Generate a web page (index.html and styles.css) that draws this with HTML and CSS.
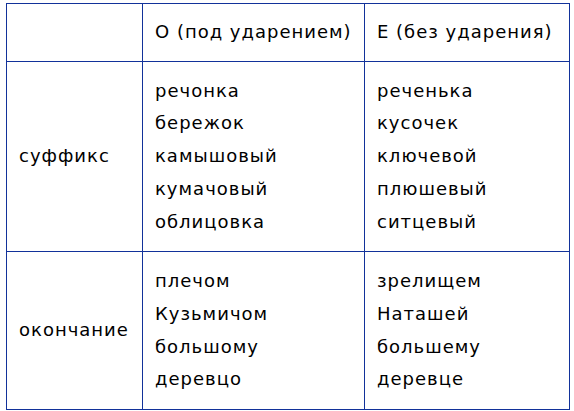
FILE: index.html
```html
<!DOCTYPE html>
<html lang="ru">
<head>
<meta charset="utf-8">
<link rel="stylesheet" href="styles.css">
</head>
<body>
<table class="grid">
  <colgroup>
    <col class="c1">
    <col class="c2">
    <col class="c3">
  </colgroup>
  <tr class="r-head">
    <td></td>
    <td>О (под ударением)</td>
    <td>Е (без ударения)</td>
  </tr>
  <tr class="r-suf">
    <td>суффикс</td>
    <td>речонка<br>бережок<br>камышовый<br>кумачовый<br>облицовка</td>
    <td>реченька<br>кусочек<br>ключевой<br>плюшевый<br>ситцевый</td>
  </tr>
  <tr class="r-end">
    <td>окончание</td>
    <td>плечом<br>Кузьмичом<br>большому<br>деревцо</td>
    <td>зрелищем<br>Наташей<br>большему<br>деревце</td>
  </tr>
</table>
</body>
</html>
```

FILE: styles.css
```css
html, body {
  margin: 0;
  background: #fff;
}
body {
  padding: 3px 6px;
  font-family: "DejaVu Sans", Verdana, sans-serif;
  font-size: 18px;
  letter-spacing: 1px;
  color: #000;
}
.grid {
  border-collapse: collapse;
  table-layout: fixed;
  width: 563px;
}
.c1 { width: 136px; }
.c2 { width: 222px; }
.c3 { width: 205px; }
.grid td {
  border: 1px solid #12329a;
  padding: 0 12px;
  line-height: 32.75px;
  vertical-align: middle;
  text-align: left;
}
.r-head td { height: 57px; }
.r-suf td { height: 189px; }
.r-end td { height: 157px; }
```
